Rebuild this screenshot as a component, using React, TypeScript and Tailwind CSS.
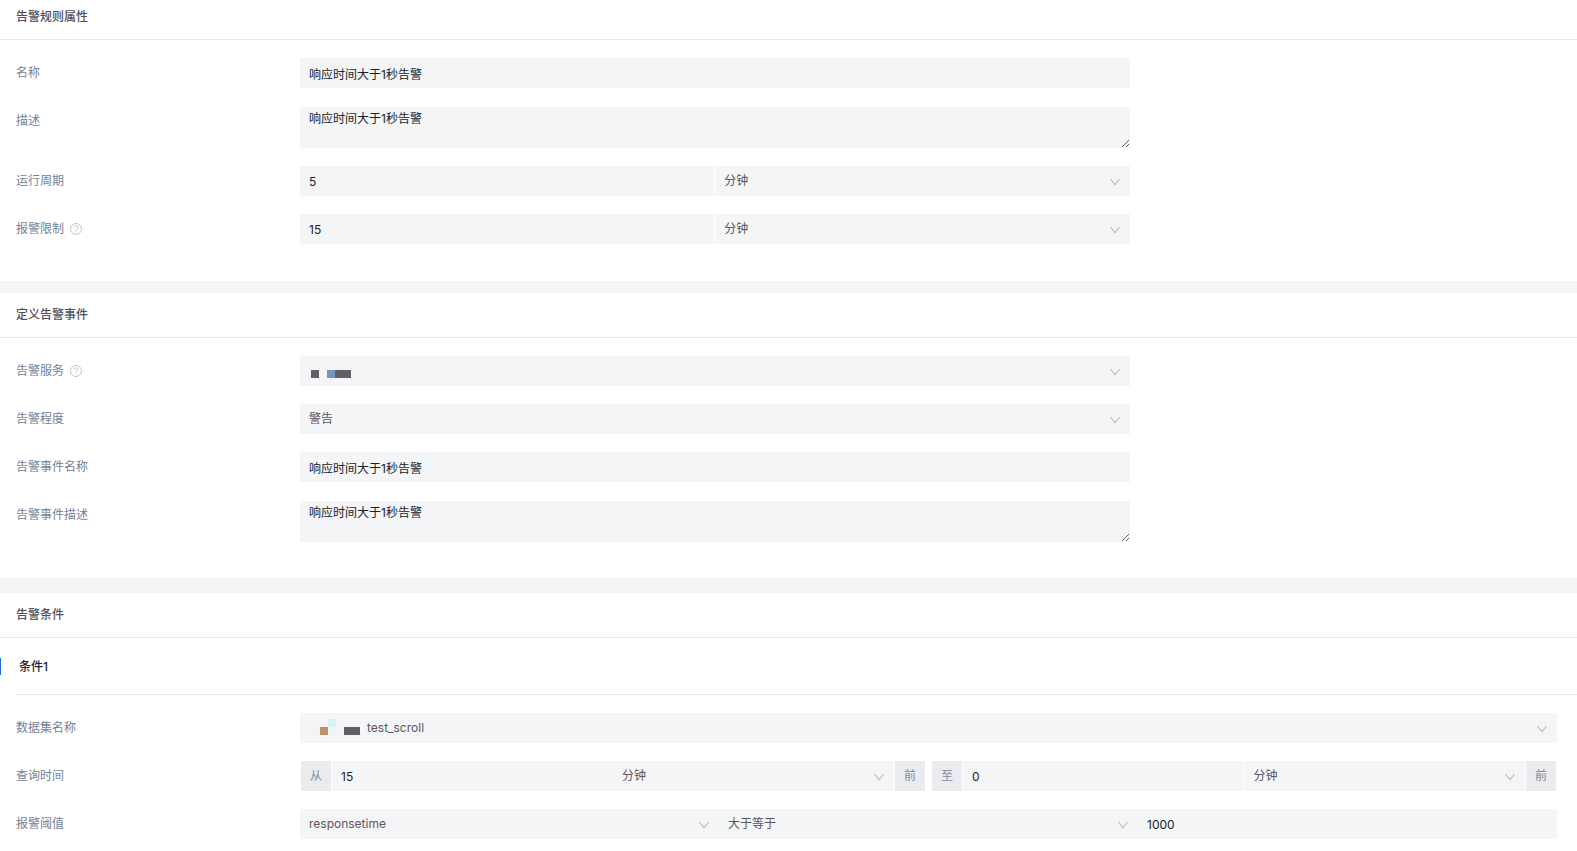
import { useId } from 'react'
import type { ReactNode } from 'react'

function HelpIcon() {
  return (
    <svg viewBox="0 0 12 12" className="size-3 shrink-0 text-[#c0c3ce]" fill="none" stroke="currentColor" aria-hidden="true">
      <circle cx="6" cy="6" r="5.5" strokeWidth="1" />
      <path d="M4 4.7c0-1.1.8-1.8 2-1.8s2 .7 2 1.7c0 1.3-2 1.3-2 2.8" strokeWidth="1" />
      <path d="M6 8.3v1.2" strokeWidth="1" />
    </svg>
  )
}

function ChevronIcon() {
  return (
    <svg
      viewBox="0 0 12 12"
      className="pointer-events-none absolute right-[9px] top-1/2 size-3 -translate-y-1/2 text-[#bfbfc3]"
      fill="none"
      stroke="currentColor"
      aria-hidden="true"
    >
      <path d="M1.5 4.2 6 9.7l4.5-5.5" strokeWidth="1.2" />
    </svg>
  )
}

interface SectionProps {
  title: string
  first?: boolean
  children: ReactNode
}

function Section({ title, first, children }: SectionProps) {
  return (
    <section className="bg-white">
      <h2
        className={`border-b border-[#e8e9ec] px-4 pb-3 text-xs leading-5 font-medium text-[#544d58] ${first ? 'pt-[7px]' : 'pt-3'}`}
      >
        {title}
      </h2>
      {children}
    </section>
  )
}

function Rows({ children }: { children: ReactNode }) {
  return <div className="flex flex-col gap-[18px] pt-[18px] pr-5 pb-9 pl-4">{children}</div>
}

interface RowProps {
  id: string
  label: string
  help?: boolean
  wide?: boolean
  children: ReactNode
}

function Row({ id, label, help, wide, children }: RowProps) {
  return (
    <div className="flex items-start">
      <label htmlFor={id} className="flex h-[30px] w-[284px] shrink-0 items-center gap-1.5 text-[#748196]">
        {label}
        {help && <HelpIcon />}
      </label>
      <div className="min-w-0 flex-1">
        <div className={wide ? 'flex' : 'flex w-[66%]'}>{children}</div>
      </div>
    </div>
  )
}

interface FieldProps {
  id?: string
  label?: string
  value: string
}

function TextInput({ id, label, value }: FieldProps) {
  return (
    <div className="h-[30px] min-w-0 flex-1">
      <input
        id={id}
        aria-label={label}
        defaultValue={value}
        className="block h-full w-full bg-[#f3f5f7] px-[9px] text-[#1d2129] outline-none"
      />
    </div>
  )
}

function TextArea({ id, value }: FieldProps) {
  return (
    <textarea
      id={id}
      defaultValue={value}
      className="mt-px block h-[41px] w-full resize-y bg-[#f3f5f7] px-[9px] py-[3px] leading-[18px] text-[#1d2129] outline-none"
    />
  )
}

interface SelectProps extends FieldProps {
  padding?: string
  children?: ReactNode
}

function Select({ id, label, value, padding = 'pl-[9px]', children }: SelectProps) {
  return (
    <div className="relative h-[30px] min-w-0 flex-1">
      <select
        id={id}
        aria-label={label}
        className={`block h-full w-full appearance-none bg-[#f3f5f7] pr-7 text-[#5b5660] outline-none ${padding}`}
      >
        <option>{value}</option>
      </select>
      {children}
      <ChevronIcon />
    </div>
  )
}

function Addon({ children }: { children: ReactNode }) {
  return (
    <span className="flex size-[30px] shrink-0 items-center justify-center bg-[#eaebef] text-[#7f8a9d]">{children}</span>
  )
}

function ServiceMask() {
  return (
    <svg viewBox="0 0 40 8" className="pointer-events-none absolute top-3.5 left-[11px] h-2 w-10" aria-hidden="true">
      <path fill="#5f6067" d="M0 0h8v8H0zM24 0h16v8H24z" />
      <path fill="#7893c6" d="M16 0h8v8h-8z" />
    </svg>
  )
}

function DatasetMask() {
  return (
    <svg viewBox="0 0 48 16" className="pointer-events-none absolute top-1.5 left-3 h-4 w-12" aria-hidden="true">
      <path fill="#f3f4ed" d="M0 8h8v8H0z" />
      <path fill="#c18f6a" d="M8 8h8v8H8z" />
      <path fill="#daeff8" d="M16 0h8v8h-8z" />
      <path fill="#eef4f8" d="M16 8h8v8h-8z" />
      <path fill="#5f6067" d="M32 8h16v8H32z" />
    </svg>
  )
}

export default function App() {
  const id = useId()

  return (
    <main className="flex min-h-screen flex-col bg-white font-['Inter','Noto_Sans_CJK_SC',sans-serif] text-xs">
      <Section title="告警规则属性" first>
        <Rows>
          <Row id={`${id}name`} label="名称">
            <TextInput id={`${id}name`} value="响应时间大于1秒告警" />
          </Row>
          <Row id={`${id}desc`} label="描述">
            <TextArea id={`${id}desc`} value="响应时间大于1秒告警" />
          </Row>
          <Row id={`${id}period`} label="运行周期">
            <div className="flex w-full gap-px">
              <TextInput id={`${id}period`} value="5" />
              <Select label="运行周期单位" value="分钟" />
            </div>
          </Row>
          <Row id={`${id}limit`} label="报警限制" help>
            <div className="flex w-full gap-px">
              <TextInput id={`${id}limit`} value="15" />
              <Select label="报警限制单位" value="分钟" />
            </div>
          </Row>
        </Rows>
      </Section>

      <div className="mt-px h-3 shrink-0 bg-[#f3f5f7]" />

      <Section title="定义告警事件">
        <Rows>
          <Row id={`${id}service`} label="告警服务" help>
            <Select id={`${id}service`} value="">
              <ServiceMask />
            </Select>
          </Row>
          <Row id={`${id}level`} label="告警程度">
            <Select id={`${id}level`} value="警告" />
          </Row>
          <Row id={`${id}event`} label="告警事件名称">
            <TextInput id={`${id}event`} value="响应时间大于1秒告警" />
          </Row>
          <Row id={`${id}eventDesc`} label="告警事件描述">
            <TextArea id={`${id}eventDesc`} value="响应时间大于1秒告警" />
          </Row>
        </Rows>
      </Section>

      <div className="h-[15px] shrink-0 bg-[#f3f5f7]" />

      <Section title="告警条件">
        <div className="flex h-14 items-center pt-px">
          <span className="h-[17px] w-px bg-[#2468d2]" />
          <h3 className="pl-[18px] font-medium text-[#1d2129]">条件1</h3>
        </div>
        <div className="ml-4 border-t border-[#e8e9ec]" />
        <div className="flex flex-col gap-[18px] pt-[18px] pr-5 pl-4">
          <Row id={`${id}dataset`} label="数据集名称" wide>
            <Select id={`${id}dataset`} value="test_scroll" padding="pl-[67px]">
              <DatasetMask />
            </Select>
          </Row>
          <Row id={`${id}from`} label="查询时间" wide>
            <div className="flex w-full gap-[7px] px-px">
              <div className="flex flex-1 gap-px">
                <Addon>从</Addon>
                <div className="flex flex-1">
                  <TextInput id={`${id}from`} value="15" />
                  <Select label="起始时间单位" value="分钟" />
                </div>
                <Addon>前</Addon>
              </div>
              <div className="flex flex-1 gap-px">
                <Addon>至</Addon>
                <TextInput label="结束时间" value="0" />
                <Select label="结束时间单位" value="分钟" />
                <Addon>前</Addon>
              </div>
            </div>
          </Row>
          <Row id={`${id}metric`} label="报警阈值" wide>
            <Select id={`${id}metric`} value="responsetime" />
            <Select label="比较方式" value="大于等于" />
            <TextInput label="阈值" value="1000" />
          </Row>
        </div>
      </Section>
    </main>
  )
}
